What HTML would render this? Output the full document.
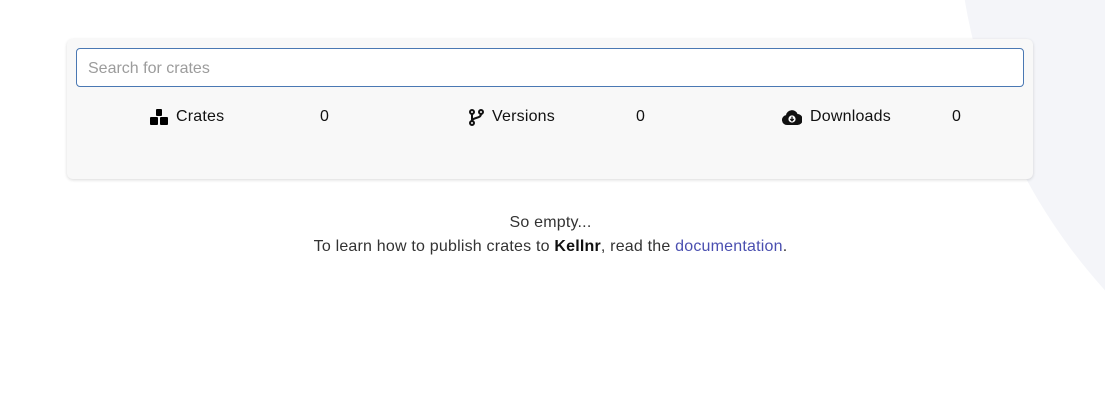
<!DOCTYPE html>
<html><head><style>
html,body{margin:0;padding:0;width:1105px;height:403px;overflow:hidden;background:#fff;font-family:"Liberation Sans",sans-serif;color:#222}
.wrap{position:relative;width:1105px;height:403px;overflow:hidden}
.circle{position:absolute;left:957px;top:-667px;width:1146px;height:1146px;border-radius:50%;background:#f4f5f9}
.card{position:absolute;left:67px;top:39px;width:966px;height:140px;background:#f8f8f8;border-radius:6px;box-shadow:0 1px 3px rgba(0,0,0,.15)}
.input{position:absolute;left:9px;top:9px;width:946px;height:37px;border:1px solid #4a78b3;border-radius:4px;background:#fff}
.input span{position:absolute;left:11px;top:11px;font-size:16px;color:#9c9c9c}
.stat{position:absolute;top:69px;font-size:16px;color:#111;display:flex;align-items:center;letter-spacing:0.2px}
.stat svg{margin-right:8px}
.num{position:absolute;top:69px;font-size:16px;color:#111}
.msg{position:absolute;left:0;width:1101px;text-align:center;font-size:16px;color:#333;letter-spacing:0.2px}
a{color:#4a4fb0;text-decoration:none}
</style></head><body><div class="wrap">
<div class="circle"></div>
<div class="card">
<div class="input"><span>Search for crates</span></div>
<div class="stat" style="left:83px"><svg width="18" height="16" viewBox="0 0 18 16"><rect x="6" y="0" width="6" height="7" rx="1"/><rect x="0" y="8" width="8" height="8" rx="1"/><rect x="10" y="8" width="8" height="8" rx="1"/></svg>Crates</div>
<div class="num" style="left:253px">0</div>
<div class="stat" style="left:401px"><svg width="16" height="17" viewBox="0 0 16 17" fill="none" stroke="#111" stroke-width="2"><circle cx="4" cy="3" r="2"/><circle cx="4" cy="14" r="2"/><circle cx="13" cy="3" r="2"/><path d="M4 5v7M13 5c0 5-9 3-9 7"/></svg>Versions</div>
<div class="num" style="left:569px">0</div>
<div class="stat" style="left:715px"><svg width="20" height="15" viewBox="0 0 20 15"><path d="M5 15a5 5 0 0 1-1-9.9A6 6 0 0 1 15.5 4 5.5 5.5 0 0 1 15 15z" fill="#111"/><circle cx="10" cy="9" r="3.6" fill="#fff"/><path d="M10 6.6v4M8.3 9l1.7 1.8 1.7-1.8" stroke="#111" stroke-width="1.3" fill="none"/></svg>Downloads</div>
<div class="num" style="left:885px">0</div>
</div>
<div class="msg" style="top:214px">So empty...</div>
<div class="msg" style="top:238px">To learn how to publish crates to <b style="color:#111">Kellnr</b>, read the <a>documentation</a>.</div>
</div></body></html>
